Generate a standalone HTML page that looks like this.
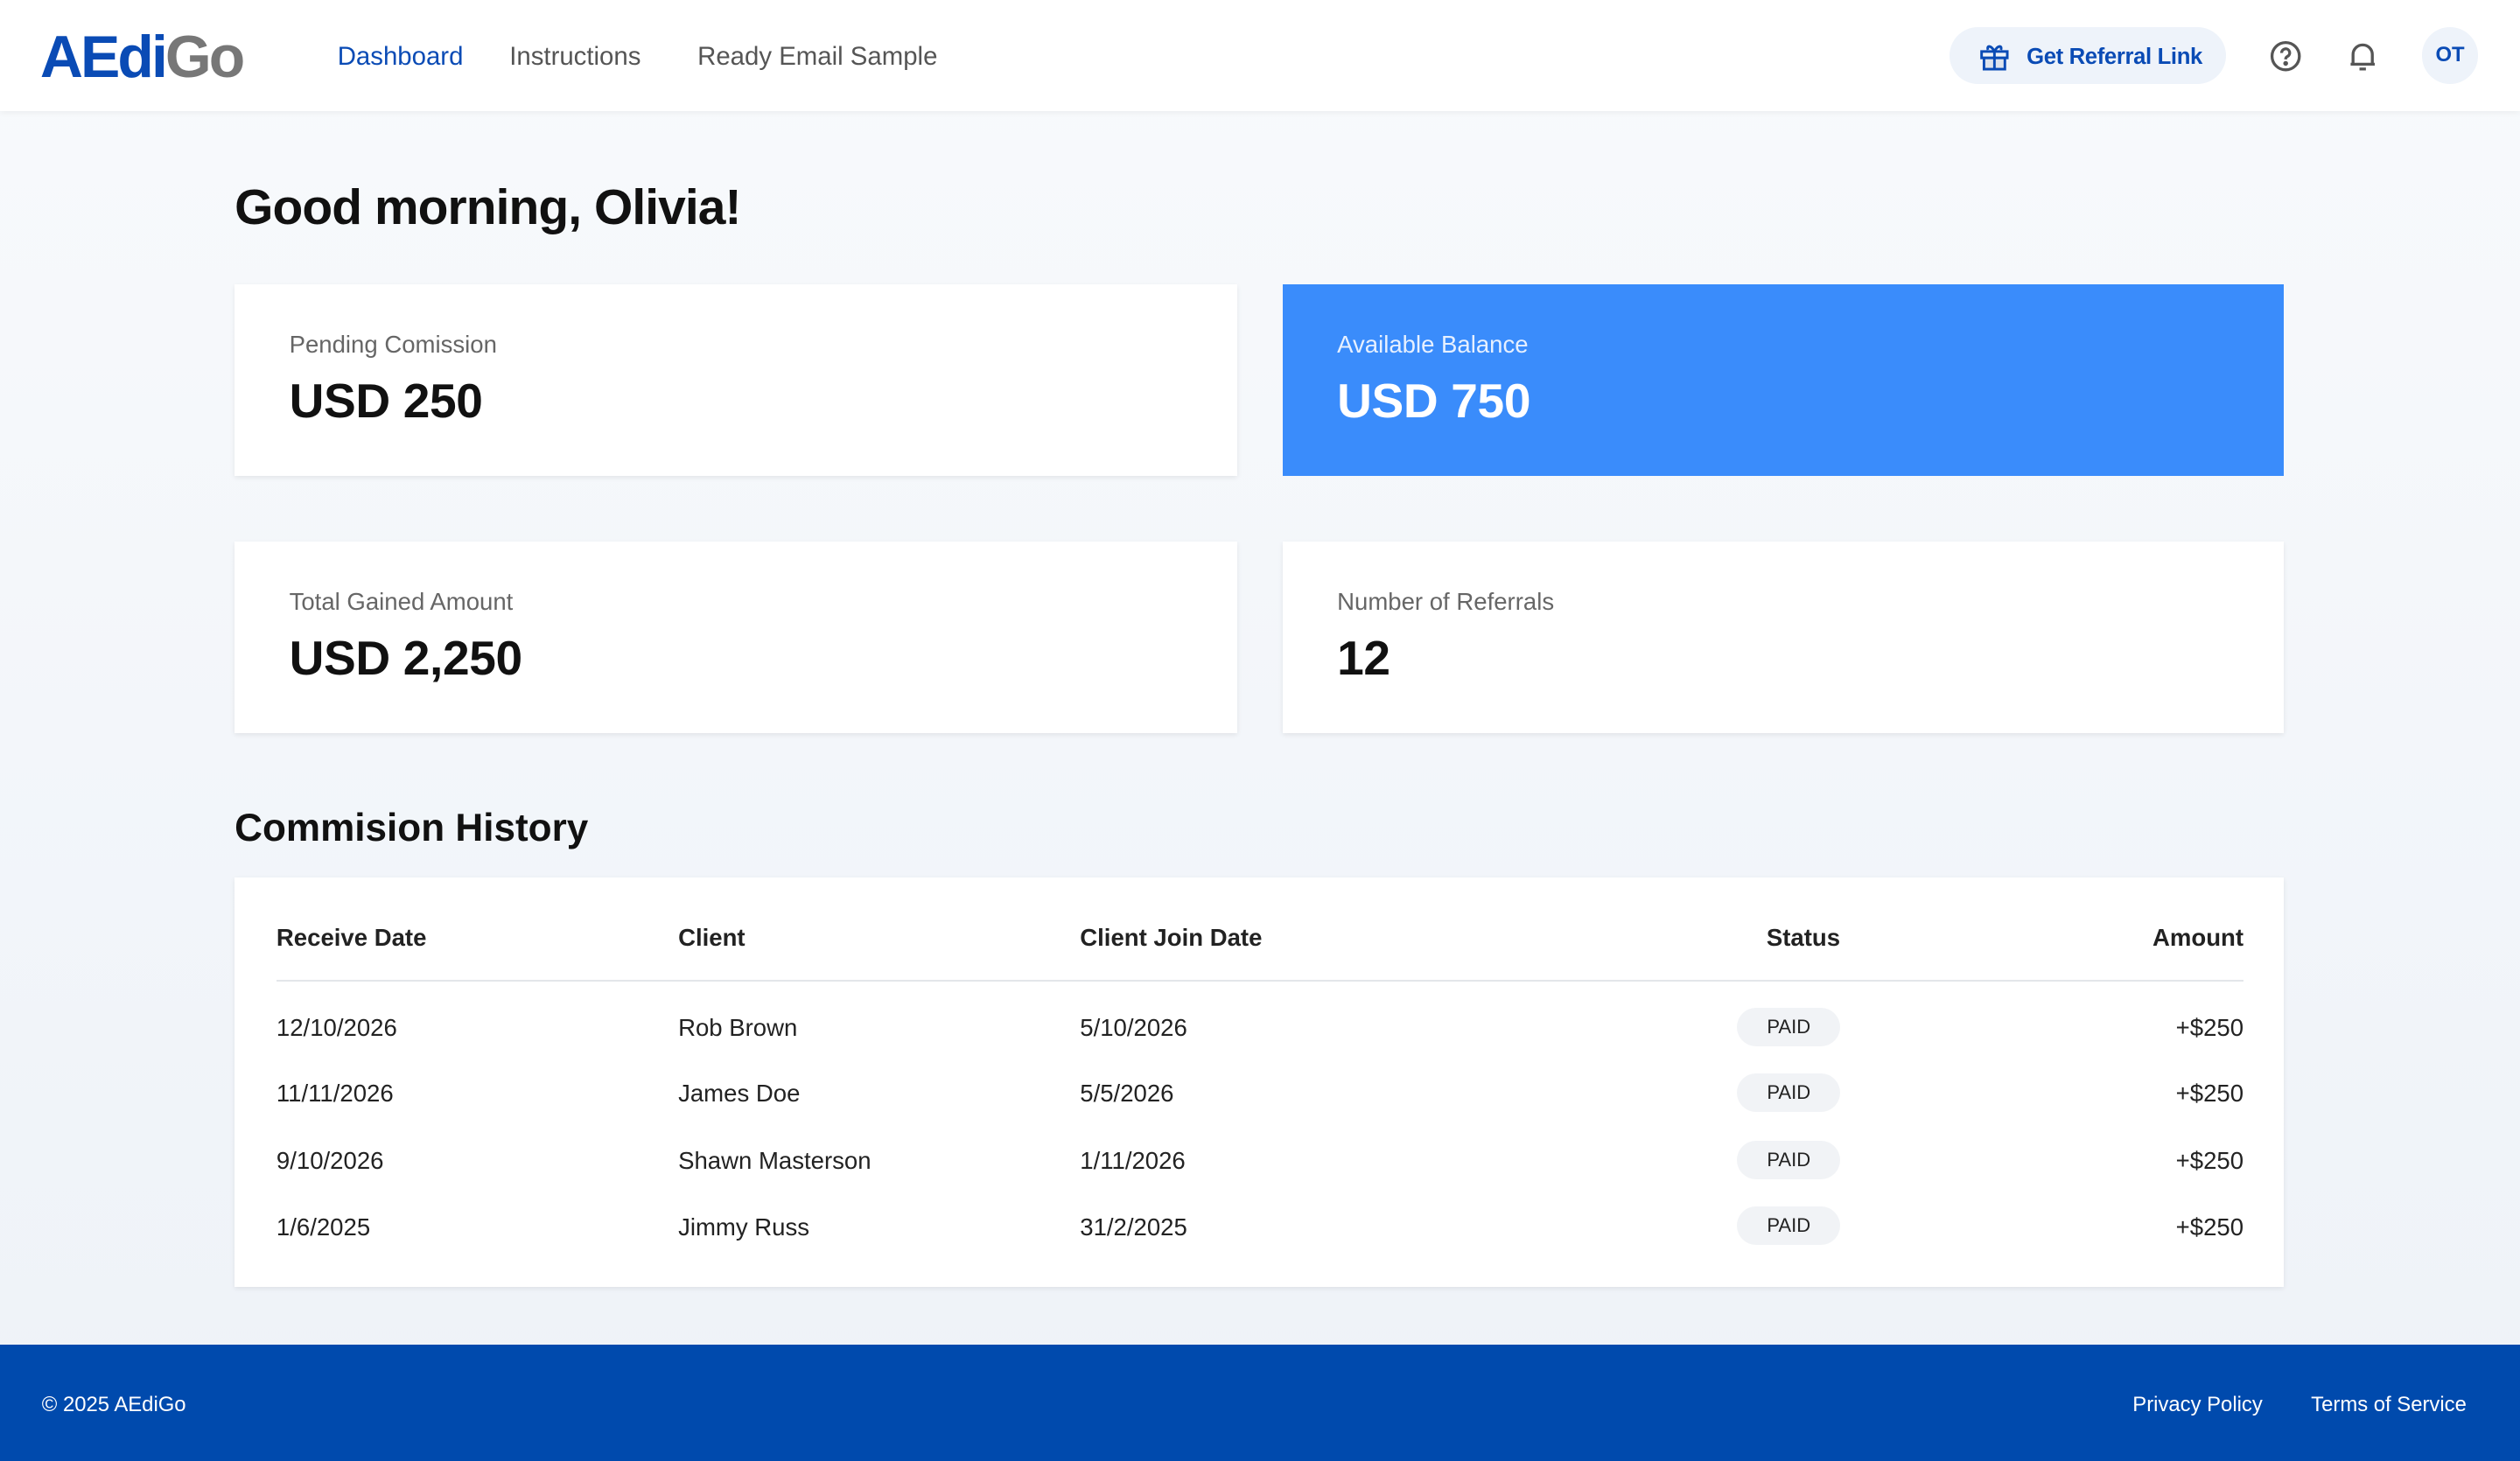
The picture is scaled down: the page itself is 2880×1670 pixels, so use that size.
<!DOCTYPE html>
<html><head><meta charset="utf-8"><style>
html,body{margin:0;padding:0;width:2880px;height:1670px;overflow:hidden}
#z{zoom:1.8367;width:1568px;height:909px;position:relative;font-family:"Liberation Sans",sans-serif;background:linear-gradient(#f8fafc,#eef2f8);color:#111}
.a{position:absolute}
.hdr{left:0;top:0;width:1568px;height:69px;background:#fff;box-shadow:0 1px 4px rgba(0,0,0,.06)}
.nav{top:26px;font-size:16px;color:#555}
.card{background:#fff;box-shadow:0 1px 3px rgba(0,0,0,.08)}
.lbl{font-size:15px;color:#666;left:34px;top:29px}
.val{font-size:30px;font-weight:bold;left:34px;top:55px;letter-spacing:-.2px}
.th{top:29px;font-size:15px;font-weight:bold;color:#222}
.td{font-size:15px;color:#222}
.pill{width:64px;height:24px;border-radius:12px;background:#f1f3f6;font-size:12px;text-align:center;line-height:24px;color:#222}
</style></head><body><div id="z">
<div class="a hdr">
 <div class="a" style="left:25px;top:14px;font-size:37px;font-weight:bold;letter-spacing:-1.6px"><span style="color:#0a4bb5">AEdi</span><span style="color:#777">Go</span></div>
 <div class="a nav" style="left:210px;color:#0a4bb5">Dashboard</div>
 <div class="a nav" style="left:317px">Instructions</div>
 <div class="a nav" style="left:434px">Ready Email Sample</div>
 <div class="a" style="left:1213px;top:17px;width:172px;height:35px;border-radius:18px;background:#eef3fa"></div>
 <svg class="a" style="left:1231px;top:25px" width="20" height="20" viewBox="0 0 20 20" fill="none" stroke="#0a4bb5" stroke-width="1.6"><rect x="2" y="7" width="16" height="4"/><rect x="3.5" y="11" width="13" height="7" fill="#dde3ec"/><path d="M10 7v11M10 7C8 3 5 3 6 6M10 7c2-4 5-4 4-1"/></svg>
 <div class="a" style="left:1261px;top:28px;font-size:14px;font-weight:bold;color:#0a4bb5;letter-spacing:-.2px">Get Referral Link</div>
 <svg class="a" style="left:1411px;top:24px" width="22" height="22" viewBox="0 0 22 22" fill="none" stroke="#555" stroke-width="1.8"><circle cx="11" cy="11" r="8.5"/><path d="M8.5 9a2.5 2.5 0 1 1 3.5 2.2c-.8.4-1 1-1 1.8"/><circle cx="11" cy="15.5" r=".6" fill="#555"/></svg>
 <svg class="a" style="left:1459px;top:24px" width="22" height="22" viewBox="0 0 22 22" fill="none" stroke="#555" stroke-width="1.8"><path d="M5 16V10a6 6 0 0 1 12 0v6zM3.5 16h15M9 19h4"/></svg>
 <div class="a" style="left:1507px;top:17px;width:35px;height:35px;border-radius:50%;background:#eef3fa;color:#0a4bb5;font-size:13px;font-weight:bold;text-align:center;line-height:35px">OT</div>
</div>
<div class="a" style="left:146px;top:111px;font-size:31px;font-weight:bold;letter-spacing:-.5px">Good morning, Olivia!</div>
<div class="a card" style="left:146px;top:177px;width:624px;height:119px"><div class="a lbl">Pending Comission</div><div class="a val">USD 250</div></div>
<div class="a" style="left:798px;top:177px;width:623px;height:119px;background:#3a8cfb;color:#fff"><div class="a lbl" style="color:#e6f0ff">Available Balance</div><div class="a val">USD 750</div></div>
<div class="a card" style="left:146px;top:337px;width:624px;height:119px"><div class="a lbl">Total Gained Amount</div><div class="a val">USD 2,250</div></div>
<div class="a card" style="left:798px;top:337px;width:623px;height:119px"><div class="a lbl">Number of Referrals</div><div class="a val">12</div></div>
<div class="a" style="left:146px;top:502px;font-size:24px;font-weight:bold">Commision History</div>
<div class="a card" style="left:146px;top:546px;width:1275px;height:255px">
 <div class="a th" style="left:26px">Receive Date</div>
 <div class="a th" style="left:276px">Client</div>
 <div class="a th" style="left:526px">Client Join Date</div>
 <div class="a th" style="right:276px">Status</div>
 <div class="a th" style="right:25px">Amount</div>
 <div class="a" style="left:26px;top:64px;width:1224px;height:1px;background:#e3e6ea"></div>
 <div class="a td" style="left:26px;top:85px">12/10/2026</div><div class="a td" style="left:276px;top:85px">Rob Brown</div><div class="a td" style="left:526px;top:85px">5/10/2026</div><div class="a pill" style="left:935px;top:81px">PAID</div><div class="a td" style="right:25px;top:85px">+$250</div>
 <div class="a td" style="left:26px;top:126px">11/11/2026</div><div class="a td" style="left:276px;top:126px">James Doe</div><div class="a td" style="left:526px;top:126px">5/5/2026</div><div class="a pill" style="left:935px;top:122px">PAID</div><div class="a td" style="right:25px;top:126px">+$250</div>
 <div class="a td" style="left:26px;top:168px">9/10/2026</div><div class="a td" style="left:276px;top:168px">Shawn Masterson</div><div class="a td" style="left:526px;top:168px">1/11/2026</div><div class="a pill" style="left:935px;top:164px">PAID</div><div class="a td" style="right:25px;top:168px">+$250</div>
 <div class="a td" style="left:26px;top:209px">1/6/2025</div><div class="a td" style="left:276px;top:209px">Jimmy Russ</div><div class="a td" style="left:526px;top:209px">31/2/2025</div><div class="a pill" style="left:935px;top:205px">PAID</div><div class="a td" style="right:25px;top:209px">+$250</div>
</div>
<div class="a" style="left:0;top:837px;width:1568px;height:72px;background:#004aad;color:#fff;font-size:13px">
 <div class="a" style="left:26px;top:30px">© 2025 AEdiGo</div>
 <div class="a" style="left:1327px;top:30px">Privacy Policy</div>
 <div class="a" style="left:1438px;top:30px">Terms of Service</div>
</div>
</div></body></html>
